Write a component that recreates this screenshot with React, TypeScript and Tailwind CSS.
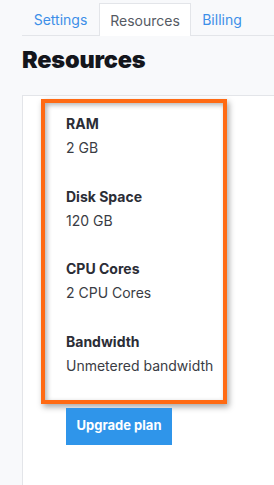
import React from 'react';

const specs = [
  { label: 'RAM', value: '2 GB' },
  { label: 'Disk Space', value: '120 GB' },
  { label: 'CPU Cores', value: '2 CPU Cores' },
  { label: 'Bandwidth', value: 'Unmetered bandwidth' },
];

const App: React.FC = () => {
  return (
    <div className="min-h-[485px] w-[274px] overflow-hidden bg-[#f8f9fb] pl-[22px] pt-[3px] font-['Inter',sans-serif]">
      <div className="flex h-[33px] items-end border-b border-[#e3e5e9] text-[14px]">
        <div className="flex h-[32px] w-[77px] items-center justify-center text-[#3d8fe8]">Settings</div>
        <div className="flex h-[33px] w-[92px] items-center justify-center border border-b-0 border-[#e3e5e9] bg-white text-[#555a63] -mb-px">Resources</div>
        <div className="flex h-[32px] w-[62px] items-center justify-center text-[#3d8fe8]">Billing</div>
      </div>
      <h1 className="mt-[9px] text-[23.5px] font-black leading-[30px] tracking-[-0.2px] text-[#14161c]">Resources</h1>
      <div className="mt-[20px] h-[400px] border-l border-t border-[#e3e5e9] bg-white pl-[18px] pt-[3px]">
        <div className="w-[186px] border-4 border-[#ff6a13] pb-[22px] pl-[21px] pt-[9px] shadow-[2px_3px_6px_rgba(0,0,0,0.35),inset_2px_2px_5px_rgba(0,0,0,0.3)]">
          {specs.map((s, i) => (
            <div key={s.label} className={i > 0 ? 'mt-[24.5px]' : ''}>
              <div className="text-[14px] font-bold leading-[24px] text-[#2b2d36]">{s.label}</div>
              <div className="text-[14px] leading-[24px] text-[#3a3c44]">{s.value}</div>
            </div>
          ))}
        </div>
        <button className="ml-[25px] mt-[4px] h-[37px] w-[106px] bg-[#2f95ea] text-[13px] font-bold text-white">Upgrade plan</button>
      </div>
    </div>
  );
};

export default App;
